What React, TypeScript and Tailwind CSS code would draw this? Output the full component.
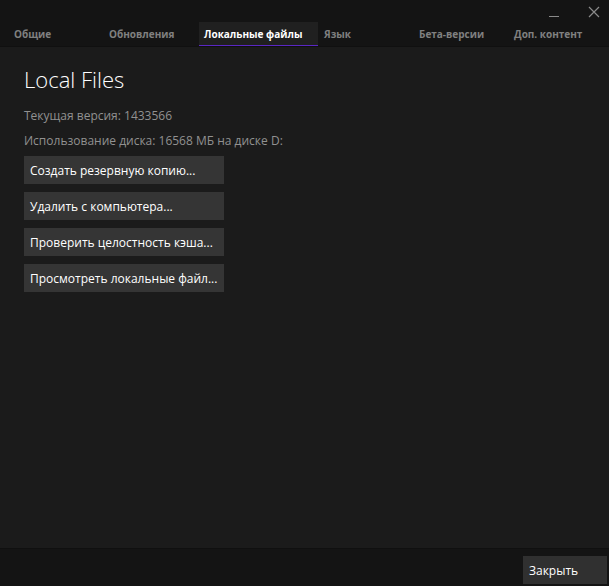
import { useState } from 'react'

const TABS = [
  { id: 'general', label: 'Общие', width: 'w-[94px]' },
  { id: 'updates', label: 'Обновления', width: 'w-[94px]' },
  { id: 'local', label: 'Локальные файлы', width: 'w-[119px]' },
  { id: 'language', label: 'Язык', width: 'w-[94px]' },
  { id: 'betas', label: 'Бета-версии', width: 'w-[94px]' },
  { id: 'dlc', label: 'Доп. контент', width: 'w-[94px]' },
]

const ACTIONS = [
  'Создать резервную копию...',
  'Удалить с компьютера...',
  'Проверить целостность кэша...',
  'Просмотреть локальные файл...',
]

function WindowControls() {
  return (
    <div className="flex h-[22px] items-start justify-end gap-7 pt-1.5 pr-[9px] text-[#8a8a8a]">
      <button type="button" aria-label="Свернуть" className="h-3 w-3">
        <svg width="12" height="12" viewBox="0 0 12 12" fill="none" stroke="currentColor">
          <path d="M1 10.5h10" />
        </svg>
      </button>
      <button type="button" aria-label="Закрыть окно" className="h-3 w-3">
        <svg width="12" height="12" viewBox="0 0 12 12" fill="none" stroke="currentColor" strokeWidth="1.2">
          <path d="M1 1l10 10M11 1L1 11" />
        </svg>
      </button>
    </div>
  )
}

export default function App() {
  const [active, setActive] = useState('local')

  return (
    <div className="flex min-h-screen flex-col bg-[#1b1b1b] font-['Open_Sans','Noto_Sans',sans-serif] text-xs text-[#919191]">
      <header className="border-b border-[#101010] bg-[#141414]">
        <WindowControls />
        <nav role="tablist" className="flex gap-px pl-[9px]">
          {TABS.map((tab) => (
            <button
              key={tab.id}
              type="button"
              role="tab"
              aria-selected={tab.id === active}
              onClick={() => setActive(tab.id)}
              className={`${tab.width} h-6 shrink-0 border-b pt-0.5 pl-[5px] text-left text-[10px] font-bold whitespace-nowrap ${
                tab.id === active ? 'border-[#5a27c4] bg-[#202020] text-white' : 'border-transparent text-[#808080]'
              }`}
            >
              {tab.label}
            </button>
          ))}
        </nav>
      </header>

      <main className="flex-1 px-6 pt-4">
        <h1 className="text-[22px] leading-8 font-light text-white">Local Files</h1>
        <p className="mt-[11px] leading-5">Текущая версия: 1433566</p>
        <p className="mt-[5px] leading-5">Использование диска: 16568 МБ на диске D:</p>
        <div className="mt-[5px] flex flex-col items-start gap-2">
          {ACTIONS.map((label) => (
            <button
              key={label}
              type="button"
              className="h-7 w-[200px] bg-[#353535] pt-0.5 pl-1.5 text-left whitespace-nowrap text-white hover:bg-[#404040]"
            >
              {label}
            </button>
          ))}
        </div>
      </main>

      <footer className="flex justify-end border-t border-[#101010] bg-[#141414] pt-[7px] pr-0.5 pb-0.5">
        <button type="button" className="h-7 w-[84px] bg-[#303030] pt-0.5 pl-1.5 text-left text-white hover:bg-[#404040]">
          Закрыть
        </button>
      </footer>
    </div>
  )
}
